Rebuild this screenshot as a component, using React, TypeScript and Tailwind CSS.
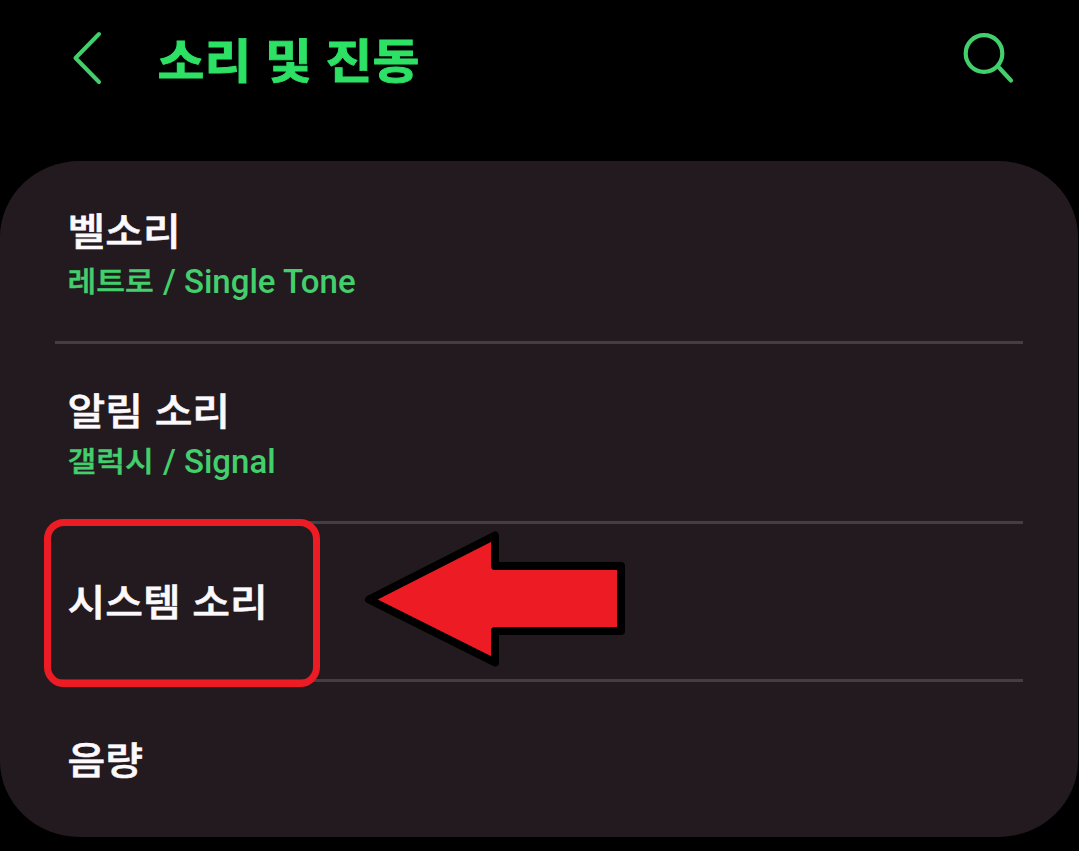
type SoundItem = {
  title: string
  source?: string
  tone?: string
  highlighted?: boolean
}

const items: SoundItem[] = [
  { title: "벨소리", source: "레트로", tone: "/ Single Tone" },
  { title: "알림 소리", source: "갤럭시", tone: "/ Signal" },
  { title: "시스템 소리", highlighted: true },
  { title: "음량" },
]

function BackIcon() {
  return (
    <svg className="h-[60px] w-[34px]" viewBox="0 0 34 60" fill="none" stroke="#42cf6c" strokeWidth="4" strokeLinecap="round" strokeLinejoin="round">
      <path d="M29 6L5.5 30L29 54" />
    </svg>
  )
}

function SearchIcon() {
  return (
    <svg className="h-[60px] w-[60px]" viewBox="0 0 60 60" fill="none" stroke="#42cf6c" strokeWidth="4.2" strokeLinecap="round">
      <circle cx="25" cy="25.5" r="18.3" />
      <path d="M39 38.5L52 52.5" />
    </svg>
  )
}

function PointerArrow() {
  return (
    <svg className="absolute top-[5px] left-[309px] h-[142px] w-[266px]" viewBox="0 0 266 142" fill="#ed1c24" stroke="#000" strokeWidth="8" strokeLinejoin="round">
      <path d="M5 70.5L131 6.5V37H257V102H131V133.5Z" />
    </svg>
  )
}

function RowTitle({ children }: { children: string }) {
  return (
    <p className="scale-y-[0.92] text-[41px] leading-[60px] font-medium text-[#fcf9fc] [-webkit-text-stroke:0.7px_#fcf9fc] [word-spacing:1.5px]">
      {children}
    </p>
  )
}

function SoundRow({ item }: { item: SoundItem }) {
  if (item.highlighted) {
    return (
      <li className="relative h-[158px] border-b-[3px] border-[#463c44] pt-[49px] pl-[12.5px]">
        <RowTitle>{item.title}</RowTitle>
        <div className="absolute -top-[5px] -left-[11px] h-[168px] w-[276px] rounded-[20px] border-[7px] border-[#ed1c24]" />
        <PointerArrow />
      </li>
    )
  }

  return (
    <li className="h-[180px] border-b-[3px] border-[#463c44] pt-[38px] pl-[12.5px] first:h-[183px] first:pt-[41px] last:h-[155px] last:border-b-0 last:pt-[49px]">
      <RowTitle>{item.title}</RowTitle>
      {item.source && (
        <p className="flex items-baseline gap-[9px] text-[33px] leading-[40px] font-medium text-[#42cf6c]">
          <span className="scale-y-[0.92] text-[31.3px] [-webkit-text-stroke:0.5px_#42cf6c]">{item.source}</span>
          <span>{item.tone}</span>
        </p>
      )}
    </li>
  )
}

export default function App() {
  return (
    <div className="h-[851px] w-[1079px] overflow-hidden bg-black font-[Roboto,'Noto_Sans_CJK_KR',sans-serif]">
      <header className="flex h-[161px] items-start pt-[28px] pr-[60px] pl-[70px]">
        <button aria-label="뒤로">
          <BackIcon />
        </button>
        <h1 className="mt-[2px] ml-[53.5px] scale-y-[0.92] text-[51px] leading-[64px] font-bold text-[#2de165] [-webkit-text-stroke:1px_#2de165] [word-spacing:1px]">
          소리 및 진동
        </h1>
        <button aria-label="검색" className="ml-auto">
          <SearchIcon />
        </button>
      </header>

      <main className="mr-px h-[676px] rounded-[80px/76px] bg-[#231a20] px-[55px]">
        <ul>
          {items.map((item) => (
            <SoundRow key={item.title} item={item} />
          ))}
        </ul>
      </main>
    </div>
  )
}
